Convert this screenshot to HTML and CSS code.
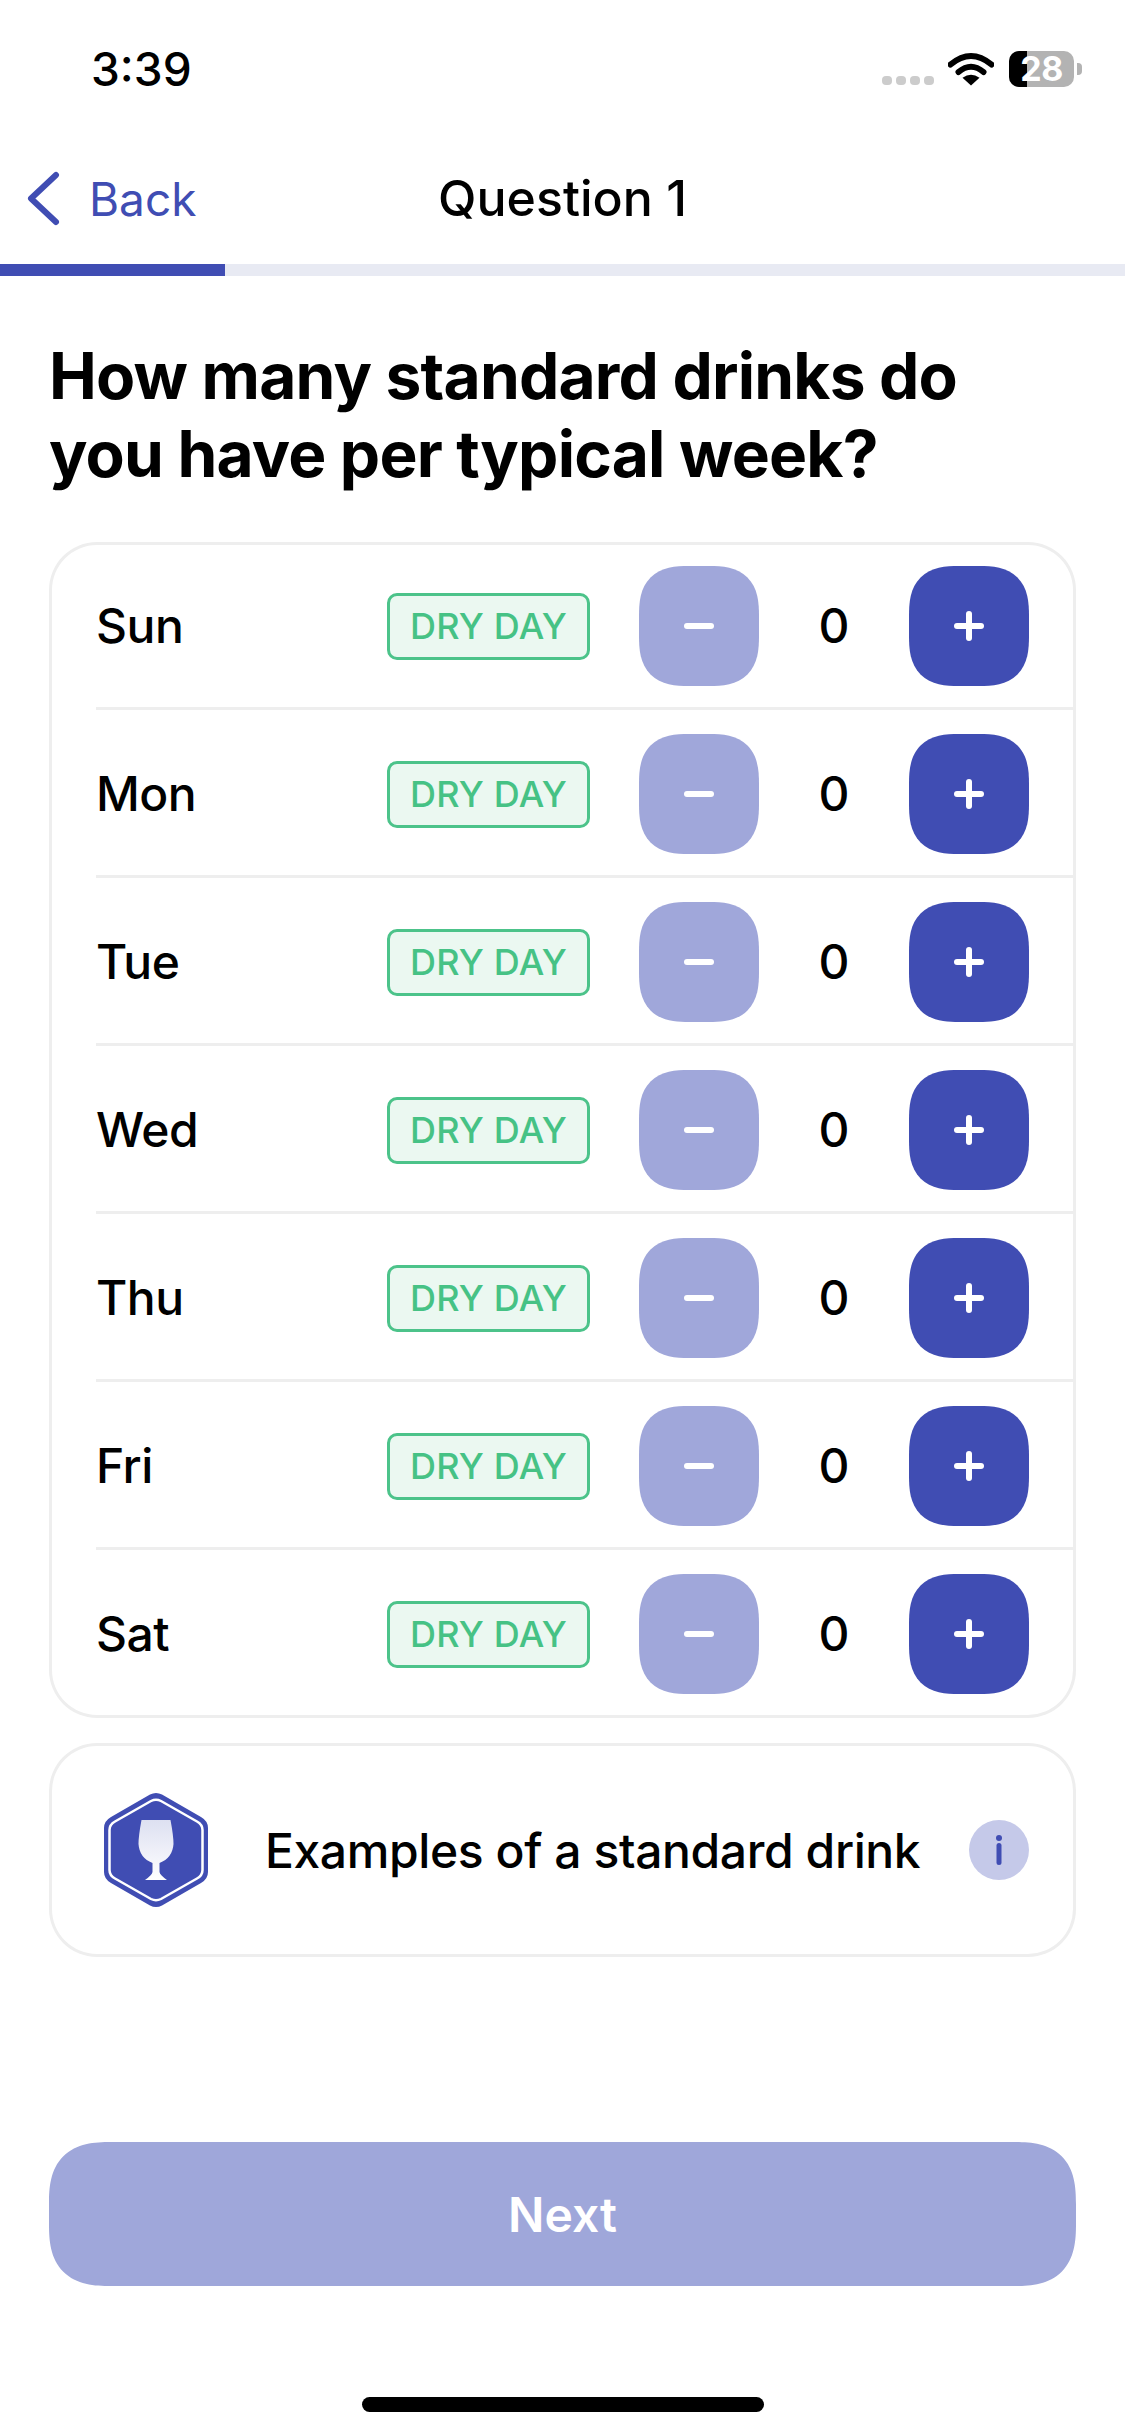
FILE: index.html
```html
<!DOCTYPE html>
<html lang="en">
<head>
    <meta charset="UTF-8">
    <meta name="viewport" content="width=device-width, initial-scale=1.0">
    <title>Question 1</title>
    <link rel="stylesheet" href="styles.css">
</head>
<body>
    <div class="screen">
        <div class="status-bar">
            <span class="time">3:39</span>
            <div class="status-icons">
                <div class="signal"><i></i><i></i><i></i><i></i></div>
                <svg class="wifi" width="46" height="34" viewBox="0 0 46 34">
                    <path d="M2.5 12.5Q23 -4.5 43.500 12.500" fill="none" stroke="#000" stroke-width="6" stroke-linecap="round"/>
                    <path d="M10.500 20Q23 9.500 35.500 20" fill="none" stroke="#000" stroke-width="6" stroke-linecap="round"/>
                    <path d="M23 33.500L14.500 25.800Q23 19.500 31.500 25.800Z" fill="#000"/>
                </svg>
                <div class="battery">
                    <div class="battery-body"><div class="battery-level"></div><span>28</span></div>
                    <div class="battery-cap"></div>
                </div>
            </div>
        </div>

        <div class="nav-bar">
            <a class="back">
                <svg width="36" height="56" viewBox="0 0 36 56">
                    <path d="M31 4L6 27.500L31 51" fill="none" stroke="#404db3" stroke-width="6" stroke-linecap="round" stroke-linejoin="round"/>
                </svg>
                <span>Back</span>
            </a>
            <h2 class="nav-title">Question 1</h2>
        </div>
        <div class="progress"><div class="progress-fill"></div></div>

        <div class="content">
            <h1>How many standard drinks do<br>you have per typical week?</h1>

            <div class="card days">
                <div class="day-row">
                    <span class="day">Sun</span>
                    <span class="badge">DRY DAY</span>
                    <div class="btn minus"><i></i></div>
                    <span class="count">0</span>
                    <div class="btn plus"><i></i><i></i></div>
                </div>
                <div class="day-row">
                    <span class="day">Mon</span>
                    <span class="badge">DRY DAY</span>
                    <div class="btn minus"><i></i></div>
                    <span class="count">0</span>
                    <div class="btn plus"><i></i><i></i></div>
                </div>
                <div class="day-row">
                    <span class="day">Tue</span>
                    <span class="badge">DRY DAY</span>
                    <div class="btn minus"><i></i></div>
                    <span class="count">0</span>
                    <div class="btn plus"><i></i><i></i></div>
                </div>
                <div class="day-row">
                    <span class="day">Wed</span>
                    <span class="badge">DRY DAY</span>
                    <div class="btn minus"><i></i></div>
                    <span class="count">0</span>
                    <div class="btn plus"><i></i><i></i></div>
                </div>
                <div class="day-row">
                    <span class="day">Thu</span>
                    <span class="badge">DRY DAY</span>
                    <div class="btn minus"><i></i></div>
                    <span class="count">0</span>
                    <div class="btn plus"><i></i><i></i></div>
                </div>
                <div class="day-row">
                    <span class="day">Fri</span>
                    <span class="badge">DRY DAY</span>
                    <div class="btn minus"><i></i></div>
                    <span class="count">0</span>
                    <div class="btn plus"><i></i><i></i></div>
                </div>
                <div class="day-row">
                    <span class="day">Sat</span>
                    <span class="badge">DRY DAY</span>
                    <div class="btn minus"><i></i></div>
                    <span class="count">0</span>
                    <div class="btn plus"><i></i><i></i></div>
                </div>
            </div>

            <div class="card examples">
                <svg class="glass-icon" width="106" height="116" viewBox="0 0 106 116">
                    <defs>
                        <linearGradient id="glassFill" x1="0" y1="0" x2="0" y2="1">
                            <stop offset="0" stop-color="#dde0f1"/>
                            <stop offset="1" stop-color="#ffffff"/>
                        </linearGradient>
                    </defs>
                    <path d="M47 2.500Q53 -0.500 59 2.500L98 25Q105 29 105 36V80Q105 87 98 91L59 113.500Q53 116.500 47 113.500L8 91Q1 87 1 80V36Q1 29 8 25Z" fill="#404db3"/>
                    <path d="M48 9Q53 6.500 58 9L94 29.500Q99.500 32.500 99.500 38V78Q99.500 83.500 94 86.500L58 107Q53 109.500 48 107L12 86.500Q6.500 83.500 6.500 78V38Q6.500 32.500 12 29.500Z" fill="none" stroke="#fff" stroke-width="2.500"/>
                    <path d="M38.500 28H67.500Q70.500 44 70.500 52Q69.500 66 56.500 71V80Q57 83 64 88H42Q49 83 49.500 80V71Q36.500 66 35.500 52Q35.500 44 38.500 28Z" fill="url(#glassFill)"/>
                </svg>
                <span class="examples-text">Examples of a standard drink</span>
                <div class="info">
                    <svg width="60" height="60" viewBox="0 0 60 60">
                        <circle cx="30" cy="30" r="30" fill="#c5c9e9"/>
                        <circle cx="30" cy="18" r="3" fill="#404db3"/>
                        <path d="M30 25.500V42.500" stroke="#404db3" stroke-width="5" stroke-linecap="round"/>
                    </svg>
                </div>
            </div>
        </div>

        <button class="next">Next</button>
        <div class="home-bar"></div>
    </div>
</body>
</html>
```

FILE: styles.css
```css
* {
    box-sizing: border-box;
}

body {
    margin: 0;
    background-color: #fff;
    font-family: Inter, "Liberation Sans", sans-serif;
    color: #000;
}

.screen {
    width: 1125px;
    height: 2436px;
    display: flex;
    flex-direction: column;
    overflow: hidden;
}

.status-bar {
    height: 112px;
    display: flex;
    justify-content: space-between;
    align-items: flex-start;
    padding: 42px 43px 0 91px;
}

.time {
    font-size: 46px;
    line-height: 54px;
    font-weight: 500;
}

.status-icons {
    display: flex;
    align-items: flex-start;
    padding-top: 10px;
}

.signal {
    display: flex;
    gap: 4px;
    margin-top: 24px;
    margin-right: 14px;
}

.signal i {
    width: 10px;
    height: 9px;
    border-radius: 4px;
    background-color: #ccc;
}

.wifi {
    display: block;
}

.battery {
    display: flex;
    align-items: center;
    margin-left: 15px;
    margin-top: -1px;
}

.battery-body {
    position: relative;
    width: 65px;
    height: 36px;
    border-radius: 10px;
    background-color: #b3b3b3;
    text-align: center;
}

.battery-level {
    position: absolute;
    left: 0;
    top: 0;
    bottom: 0;
    width: 18px;
    border-radius: 10px 0 0 10px;
    background-color: #000;
}

.battery-body span {
    position: relative;
    font-size: 34px;
    line-height: 36px;
    font-weight: 700;
    letter-spacing: -0.5px;
    color: #fff;
}

.battery-cap {
    width: 5px;
    height: 12px;
    margin-left: 3px;
    border-radius: 0 4px 4px 0;
    background-color: #b3b3b3;
}

.nav-bar {
    position: relative;
    height: 152px;
    display: flex;
    justify-content: center;
    padding-top: 58px;
}

.back {
    position: absolute;
    left: 25px;
    top: 59px;
    display: flex;
    align-items: center;
    gap: 28px;
    color: #404db3;
    font-size: 46px;
    line-height: 56px;
}

.back svg {
    display: block;
}

.nav-title {
    margin: 0;
    font-size: 50px;
    font-weight: 550;
    line-height: 56px;
}

.progress {
    height: 12px;
    flex-shrink: 0;
    background-color: #e8eaf3;
}

.progress-fill {
    width: 20%;
    height: 100%;
    background-color: #404db3;
}

.content {
    padding: 0 49px;
}

h1 {
    margin: 61px 0 49px;
    font-size: 64px;
    font-weight: 700;
    line-height: 78px;
    letter-spacing: -0.8px;
    white-space: nowrap;
}

.card {
    width: 1027px;
    border-radius: 48px;
    box-shadow: inset 0 0 0 3px #eeeeee;
}

.day-row {
    height: 168px;
    margin-left: 47px;
    padding-top: 3px;
    padding-right: 46px;
    border-bottom: 3px solid #eeeeee;
    display: flex;
    align-items: center;
}

.day-row:last-child {
    border-bottom-color: transparent;
}

.day {
    width: 291px;
    margin-bottom: 2px;
    font-size: 48px;
    font-weight: 550;
    letter-spacing: -0.5px;
}

.badge {
    width: 203px;
    height: 67px;
    border: 3px solid #4cc38a;
    border-radius: 10px;
    background-color: #ebf8f1;
    color: #46c285;
    font-size: 36px;
    font-weight: 450;
    letter-spacing: 0.2px;
    text-align: center;
    line-height: 61px;
}

.btn {
    position: relative;
    width: 120px;
    height: 120px;
    border-radius: 50px;
    corner-shape: superellipse(1.4);
    flex-shrink: 0;
}

.btn i {
    position: absolute;
    left: 45px;
    top: 57px;
    width: 30px;
    height: 6px;
    border-radius: 3px;
    background-color: #fff;
}

.btn i + i {
    left: 57px;
    top: 45px;
    width: 6px;
    height: 30px;
}

.minus {
    margin-left: 49px;
    background-color: #a0a7da;
}

.plus {
    background-color: #404db3;
}

.count {
    width: 150px;
    margin-bottom: 2px;
    text-align: center;
    font-size: 48px;
    font-weight: 550;
}

.examples {
    height: 214px;
    margin-top: 25px;
    display: flex;
    align-items: center;
    padding: 0 47px 0 54px;
}

.glass-icon {
    display: block;
    flex-shrink: 0;
}

.examples-text {
    margin-left: 56px;
    font-size: 48px;
    font-weight: 550;
    letter-spacing: -0.4px;
    white-space: nowrap;
}

.info {
    margin-left: auto;
    height: 60px;
}

.next {
    display: block;
    flex-shrink: 0;
    width: 1027px;
    height: 144px;
    margin: auto 49px 0;
    border: none;
    border-radius: 62px;
    corner-shape: superellipse(1.4);
    background-color: #9fa7da;
    color: #fff;
    font-family: inherit;
    font-size: 48px;
    font-weight: 600;
}

.home-bar {
    width: 402px;
    height: 15px;
    margin: 111px auto 24px;
    border-radius: 8px;
    background-color: #000;
}
```
